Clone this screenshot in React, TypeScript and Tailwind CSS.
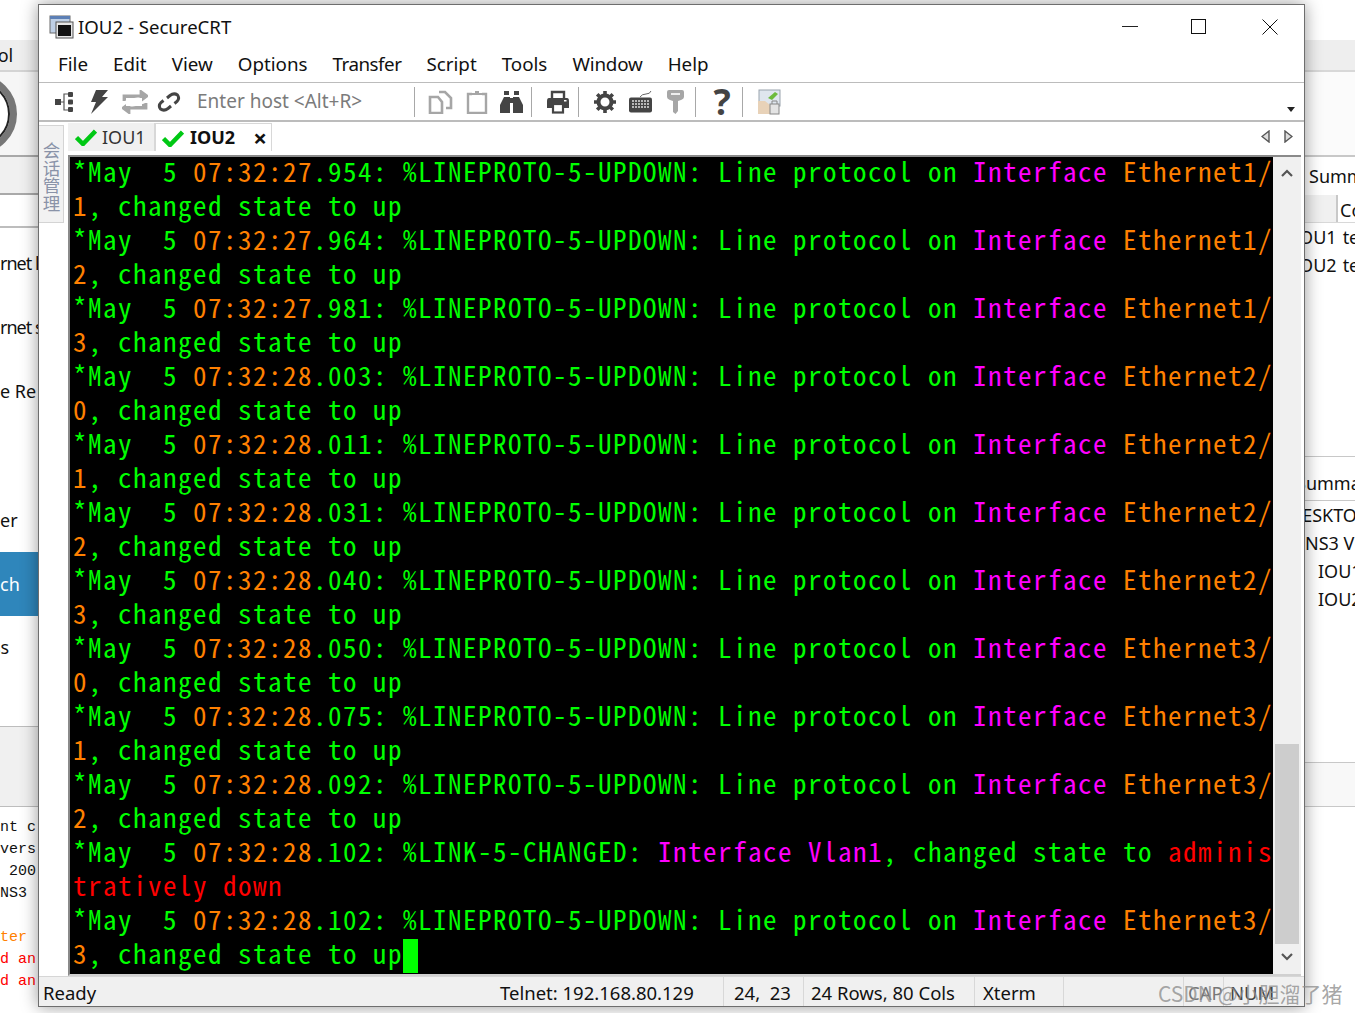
const term = "font-['Noto_Sans_CJK_SC',monospace] [font-feature-settings:'hwid'] tracking-[1.5px]";

type Seg = [string, string];

const G = "text-[#00ff00]";
const O = "text-[#ff8000]";
const M = "text-[#ff00ff]";
const R = "text-[#ff0000]";

const updown = (ms: string, time: string, iface: string, port: string): Seg[][] => [
  [
    ["*May  5 ", G],
    [time, O],
    [`.${ms}: %LINEPROTO-5-UPDOWN: Line protocol on `, G],
    ["Interface ", M],
    [iface, O],
  ],
  [
    [port, O],
    [", changed state to up", G],
  ],
];

const lines: Seg[][] = [
  ...updown("954", "07:32:27", "Ethernet1/", "1"),
  ...updown("964", "07:32:27", "Ethernet1/", "2"),
  ...updown("981", "07:32:27", "Ethernet1/", "3"),
  ...updown("003", "07:32:28", "Ethernet2/", "0"),
  ...updown("011", "07:32:28", "Ethernet2/", "1"),
  ...updown("031", "07:32:28", "Ethernet2/", "2"),
  ...updown("040", "07:32:28", "Ethernet2/", "3"),
  ...updown("050", "07:32:28", "Ethernet3/", "0"),
  ...updown("075", "07:32:28", "Ethernet3/", "1"),
  ...updown("092", "07:32:28", "Ethernet3/", "2"),
  [
    ["*May  5 ", G],
    ["07:32:28", O],
    [".102: %LINK-5-CHANGED: ", G],
    ["Interface Vlan1", M],
    [", changed state to ", G],
    ["adminis", R],
  ],
  [["tratively down", R]],
  ...updown("102", "07:32:28", "Ethernet3/", "3"),
];

const menus = [
  { name: "File", cls: "" },
  { name: "Edit", cls: "" },
  { name: "View", cls: "" },
  { name: "Options", cls: "" },
  { name: "Transfer", cls: "tracking-[-0.5px]" },
  { name: "Script", cls: "" },
  { name: "Tools", cls: "" },
  { name: "Window", cls: "tracking-[-0.15px]" },
  { name: "Help", cls: "" },
];

const Check = () => (
  <svg width="22" height="18" viewBox="0 0 22 18">
    <path d="M1.5 9.5 L8 16 L20.5 3" fill="none" stroke="#00c814" strokeWidth="4.5" />
  </svg>
);

const Sep = () => <div className="w-px h-[30px] bg-[#a8a8a8]" />;

const Toolbar = () => (
  <div className="h-[39px] shrink-0 flex items-center relative border-b-2 border-[#bcbcbc]">
    <svg className="ml-[14px]" width="22" height="24" viewBox="0 0 22 24">
      <rect x="2" y="9" width="6" height="6" fill="#444" />
      <path d="M15 4 H11 V20 H15 M8 12 H11" fill="none" stroke="#555" strokeWidth="1.2" />
      <rect x="15" y="2" width="5" height="5" rx="1" fill="#444" />
      <rect x="15" y="9.5" width="5" height="5" rx="1" fill="#444" />
      <rect x="15" y="17" width="5" height="5" rx="1" fill="#444" />
    </svg>
    <svg className="ml-[13px]" width="22" height="26" viewBox="0 0 22 26">
      <path d="M8 1 H20 L14 8 H20 L3 25 L8 13 H3 Z" fill="#444" />
    </svg>
    <svg className="ml-[12px]" width="26" height="24" viewBox="0 0 26 24">
      <path d="M2 11 V6 H19 M19 1.5 L25 6 L19 10.5 Z M24 13 V18 H7 M7 13.5 L1 18 L7 22.5 Z" fill="#a6a6a6" stroke="#a6a6a6" strokeWidth="2.8" />
      <rect x="4" y="8" width="16" height="8" fill="white" />
    </svg>
    <svg className="ml-[9px]" width="24" height="24" viewBox="0 0 24 24">
      <path d="M10 8 L13 5.5 Q17 2.5 20.5 5 Q23 8.5 20 11.5 L17.5 13.5 M14 16 L11 18.5 Q7 21.5 3.5 19 Q1 15.5 4 12.5 L6.5 10.5" fill="none" stroke="#444" strokeWidth="3" />
    </svg>
    <span className="ml-[16px] w-[217px] text-[19px] text-[#7b7b7b] leading-none">
      Enter host &lt;Alt+R&gt;
    </span>
    <Sep />
    <svg className="ml-[13px]" width="25" height="24" viewBox="0 0 25 24">
      <path d="M10 7 H2 V23 H14 V12 Z M11 2 H17 L23 8 V18 H18" fill="none" stroke="#a6a6a6" strokeWidth="2.6" />
    </svg>
    <svg className="ml-[13px]" width="22" height="24" viewBox="0 0 22 24">
      <path d="M6 4 H2 V23 H20 V4 H16" fill="none" stroke="#a6a6a6" strokeWidth="2.4" />
      <path d="M6 5 H16 V3 H13 V1 H9 V3 H6 Z" fill="#a6a6a6" />
    </svg>
    <svg className="ml-[11px]" width="25" height="24" viewBox="0 0 25 24">
      <path d="M5 1 H10 V5 H5 Z M15 1 H20 V5 H15 Z" fill="#444" />
      <path d="M5 7 H11 V23 H1 V15 Z M14 7 H20 L24 15 V23 H14 Z" fill="#444" />
      <rect x="11" y="8" width="3" height="5" fill="#444" />
    </svg>
    <div className="ml-[7px]"><Sep /></div>
    <svg className="ml-[14px]" width="24" height="24" viewBox="0 0 24 24">
      <path d="M6 8 V2 H18 V8" fill="none" stroke="#444" strokeWidth="2.4" />
      <path d="M3 8 H21 Q23 8 23 11 V18 H1 V11 Q1 8 3 8 Z" fill="#444" />
      <rect x="7" y="14" width="10" height="8.5" fill="white" stroke="#444" strokeWidth="2.2" />
      <rect x="18" y="10" width="2.5" height="1.5" fill="white" />
    </svg>
    <div className="ml-[8px]"><Sep /></div>
    <svg className="ml-[14px]" width="24" height="24" viewBox="0 0 24 24">
      <circle cx="12" cy="12" r="6.5" fill="none" stroke="#444" strokeWidth="4" />
      <path d="M12 1 V5 M12 19 V23 M1 12 H5 M19 12 H23 M4.2 4.2 L7 7 M17 17 L19.8 19.8 M4.2 19.8 L7 17 M17 7 L19.8 4.2" stroke="#444" strokeWidth="3.6" />
    </svg>
    <svg className="ml-[11px]" width="25" height="22" viewBox="0 0 25 22">
      <path d="M12 6 Q14 3 18 3 Q22 3 23 0" fill="none" stroke="#666" strokeWidth="1" />
      <rect x="1" y="6.5" width="23" height="15" rx="2" fill="#444" />
      <path d="M4 10 H21 M4 13 H21 M4 16 H21" stroke="#ddd" strokeWidth="1.6" strokeDasharray="2 1" />
    </svg>
    <svg className="ml-[13px]" width="19" height="26" viewBox="0 0 19 26">
      <path d="M3 1 H16 Q18 1 18 3 V8 Q18 10 15 11 L12 12 V22 L9.5 25 L7 23 V12 L4 11 Q1 10 1 8 V3 Q1 1 3 1 Z" fill="#a6a6a6" />
      <rect x="5" y="4" width="9" height="2" fill="#eee" />
    </svg>
    <div className="ml-[10px]"><Sep /></div>
    <span className="ml-[14px] w-[24px] text-center text-[36px] font-bold leading-none text-[#444]">?</span>
    <div className="ml-[8px]"><Sep /></div>
    <svg className="ml-[14px]" width="24" height="26" viewBox="0 0 24 26">
      <rect x="2" y="1" width="21" height="16" fill="#dfe6ee" stroke="#9aa3ad" />
      <path d="M11 9 L18 3 L21 5 L15 11 Z" fill="#6cbb3c" />
      <path d="M1 12 H8 L13 16 V25 H1 Z" fill="#e8d2b8" />
      <rect x="13" y="15" width="9" height="10" fill="#e4e4e4" stroke="#888" />
      <path d="M15 15 V12 H20 V15" fill="none" stroke="#888" />
    </svg>
    <svg className="absolute right-[9px] bottom-[8px]" width="8" height="5" viewBox="0 0 8 5">
      <path d="M0 0 H8 L4 5 Z" fill="#222" />
    </svg>
  </div>
);

export default function App() {
  return (
    <div className="relative w-[1355px] h-[1013px] overflow-hidden flex bg-white text-[#111] font-['Noto_Sans',sans-serif]">
      {/* app behind, left side */}
      <div className="w-[38px] shrink-0 overflow-hidden text-[18px] leading-none whitespace-nowrap">
        <div className="h-[40px]" />
        <div className="h-[32px] bg-[#eeeeee] border-b-2 border-[#d4d4d4] flex items-center">
          <span className="ml-[-22px]">Tool</span>
        </div>
        <div className="h-[85px] bg-[#f6f6f6] border-b-2 border-[#a9a9a9] flex items-center overflow-hidden">
          <div className="ml-[-63px] w-[80px] h-[80px] shrink-0 rounded-full border-[7px] border-[#777] bg-white">
            <div className="w-full h-full rounded-full border-2 border-[#222]" />
          </div>
        </div>
        <div className="h-[38px] bg-[#f0f0f0] border-b-2 border-[#a9a9a9]" />
        <div className="h-[33px] border-b-2 border-[#bdbdbd]" />
        <div className="h-[498px] flex flex-col">
          <span className="mt-[26px] tracking-[-1px]">rnet l</span>
          <span className="mt-[46px] tracking-[-1px]">rnet s</span>
          <span className="mt-[46px] ml-0">e Re</span>
          <span className="mt-[111px]">er</span>
          <div className="mt-[23px] h-[64px] shrink-0 bg-[#2f86bb] text-white flex items-center">ch</div>
          <span className="mt-[22px] ml-[-8px]">ss</span>
        </div>
        <div className="h-[81px] bg-[#f0f0f0] border-y border-[#bdbdbd]" />
        <div className="pt-[10px] font-['Liberation_Mono',monospace] text-[15px] leading-[22px]">
          <div>nt c</div>
          <div>vers</div>
          <div>&nbsp;200</div>
          <div>NS3 </div>
          <div>&nbsp;</div>
          <div className="text-[#ff8000]">ter</div>
          <div className="text-[#ff0000]">d an</div>
          <div className="text-[#ff0000]">d an</div>
        </div>
      </div>

      {/* SecureCRT window */}
      <div className="w-[1267px] h-[1003px] mt-[4px] shrink-0 flex flex-col bg-white border border-[#6e6e6e] shadow-[0_0_16px_rgba(0,0,0,0.4)] z-10 text-[18px]">
        <div className="h-[36px] shrink-0 pt-[7px] flex items-center text-[18.6px]">
          <svg className="ml-[10px]" width="25" height="24" viewBox="0 0 25 24">
            <rect x="1" y="1" width="20" height="17" fill="#bfd0e6" stroke="#6a6a6a" />
            <rect x="1" y="1" width="20" height="3" fill="#5c7fb5" />
            <rect x="7" y="7" width="17" height="16" fill="#e6e6e6" stroke="#555" />
            <rect x="9" y="10" width="13" height="11" fill="#111" />
          </svg>
          <span className="ml-[4px]">IOU2 - SecureCRT</span>
          <div className="ml-auto flex items-center">
            <div className="w-[16px] h-px bg-[#222] mr-[53px]" />
            <div className="w-[15px] h-[15px] border border-[#111] mr-[56px]" />
            <svg className="mr-[26px]" width="16" height="16" viewBox="0 0 16 16">
              <path d="M0.5 0.5 L15.5 15.5 M15.5 0.5 L0.5 15.5" stroke="#111" strokeWidth="1" />
            </svg>
          </div>
        </div>
        <div className="h-[42px] shrink-0 flex items-center gap-[25px] pl-[19px] pt-[6px] border-b border-[#bcbcbc] text-[18.8px]">
          {menus.map((m) => (
            <span key={m.name} className={m.cls}>{m.name}</span>
          ))}
        </div>
        <Toolbar />
        <div className="flex-1 flex min-h-0">
          <div className="w-[29px] shrink-0 pt-[3px]">
            <div className="w-[25px] h-[98px] bg-[#f2f2f2] border border-[#d4d4d4] border-l-0 text-[#8a93a8] text-[17.5px] leading-[24px] pt-[6px] flex items-start justify-center font-['Noto_Sans_CJK_SC',sans-serif] [writing-mode:vertical-rl]">
              会话管理
            </div>
          </div>
          <div className="flex-1 flex flex-col min-w-0">
            <div className="h-[33px] shrink-0 flex items-start pt-[1px]">
              <div className="w-[87px] h-[28px] bg-[#f0f0f0] border-r border-[#d8d8d8] flex items-center pl-[7px] gap-[5px] text-[#333]">
                <Check />
                <span>IOU1</span>
              </div>
              <div className="w-[117px] h-[28px] border border-b-0 border-[#d8d8d8] flex items-center pl-[6px] gap-[6px]">
                <Check />
                <span className="font-bold">IOU2</span>
                <span className="ml-[12px] text-[24px] font-bold leading-none">×</span>
              </div>
              <div className="ml-auto mt-[7px] flex gap-[14px] mr-[11px]">
                <svg width="9" height="13" viewBox="0 0 9 13"><path d="M8 1 L1 6.5 L8 12 Z" fill="#ddd" stroke="#555" strokeWidth="1.4" /></svg>
                <svg width="9" height="13" viewBox="0 0 9 13"><path d="M1 1 L8 6.5 L1 12 Z" fill="#ddd" stroke="#555" strokeWidth="1.4" /></svg>
              </div>
            </div>
            <div className="h-[821px] shrink-0 mr-[3px] flex border-t-2 border-l-2 border-[#8a8a8a] border-b-2 border-b-[#d0d0d0]">
              <div className={`w-[1203px] bg-black pl-[3px] ${term} text-[27px] leading-[27px] whitespace-pre overflow-hidden`}>
                {lines.map((segs, i) => (
                  <div key={i} className="h-[34px]">
                    {segs.map(([t, c], j) => (
                      <span key={j} className={c}>{t}</span>
                    ))}
                    {i === lines.length - 1 && (
                      <span className="inline-block w-[15px] h-[34px] bg-[#00ff00] align-top" />
                    )}
                  </div>
                ))}
              </div>
              <div className="flex-1 bg-[#f0f0f0] flex flex-col items-center">
                <svg className="mt-[12px]" width="12" height="8" viewBox="0 0 12 8">
                  <path d="M1 7 L6 2 L11 7" fill="none" stroke="#555" strokeWidth="2.2" />
                </svg>
                <div className="mt-[567px] w-[24px] h-[200px] bg-[#cdcdcd]" />
                <svg className="mt-[9px]" width="12" height="8" viewBox="0 0 12 8">
                  <path d="M1 1 L6 6 L11 1" fill="none" stroke="#555" strokeWidth="2.2" />
                </svg>
              </div>
            </div>
          </div>
        </div>
        <div className="h-[30px] shrink-0 bg-[#f0f0f0] border-t border-[#d6d6d6] flex items-stretch text-[18.5px] whitespace-nowrap [&>span]:flex [&>span]:items-center [&>span]:pt-[3px]">
          <span className="ml-[4px] w-[453px]">Ready</span>
          <span className="w-[228px] pl-[4px] border-r border-[#d8d8d8]">Telnet: 192.168.80.129</span>
          <span className="w-[80px] pl-[10px] border-r border-[#d8d8d8]">24,&nbsp;&nbsp;23</span>
          <span className="w-[171px] pl-[7px] border-r border-[#d8d8d8]">24 Rows, 80 Cols</span>
          <span className="w-[89px] pl-[8px] border-r border-[#d8d8d8]">Xterm</span>
          <span className="ml-[119px] w-[41px] pl-[4px] border-x border-[#d8d8d8] text-[#777]">CAP</span>
          <span className="pl-[6px] text-[#444]">NUM</span>
        </div>
      </div>

      {/* app behind, right side */}
      <div className="flex-1 min-w-0 overflow-hidden text-[18px] leading-none whitespace-nowrap">
        <div className="h-[40px]" />
        <div className="h-[32px] bg-[#eeeeee] border-b-2 border-[#d8d8d8]" />
        <div className="h-[85px] bg-[#fbfbfb] border-b-2 border-[#c8c8c8]" />
        <div className="h-[38px] flex items-center pl-[4px]">Summary</div>
        <div className="h-[28px] flex bg-[#f0f0f0] border-b border-[#d8d8d8]">
          <div className="w-[33px] shrink-0 border-r-2 border-[#c8c8c8]" />
          <div className="pl-[2px] pt-[6px] bg-white grow">Console</div>
        </div>
        <div className="h-[233px]">
          <div className="h-[28px] flex items-center ml-[-12px]">IOU1<span className="ml-[6px]">telnet</span></div>
          <div className="h-[28px] flex items-center ml-[-12px]">IOU2<span className="ml-[6px]">telnet</span></div>
        </div>
        <div className="h-[45px] border-y border-[#c8c8c8] flex items-center ml-[-12px] pl-[3px] pt-[9px]">Summary</div>
        <div className="h-[261px]">
          <div className="h-[28px] flex items-center ml-[-16px]">DESKTOP</div>
          <div className="h-[28px] flex items-center">NS3 VM</div>
          <div className="h-[28px] flex items-center pl-[13px]">IOU1</div>
          <div className="h-[28px] flex items-center pl-[13px]">IOU2</div>
        </div>
        <div className="h-[45px] bg-[#f8f8f8] border-y border-[#c8c8c8]" />
      </div>

      <span className="absolute left-[1158px] top-[980px] z-20 text-[21px] leading-[26px] text-[#8f8f8f]/80 font-['Noto_Sans_CJK_SC',sans-serif] whitespace-nowrap">
        CSDN @小胆溜了猪
      </span>
    </div>
  );
}
